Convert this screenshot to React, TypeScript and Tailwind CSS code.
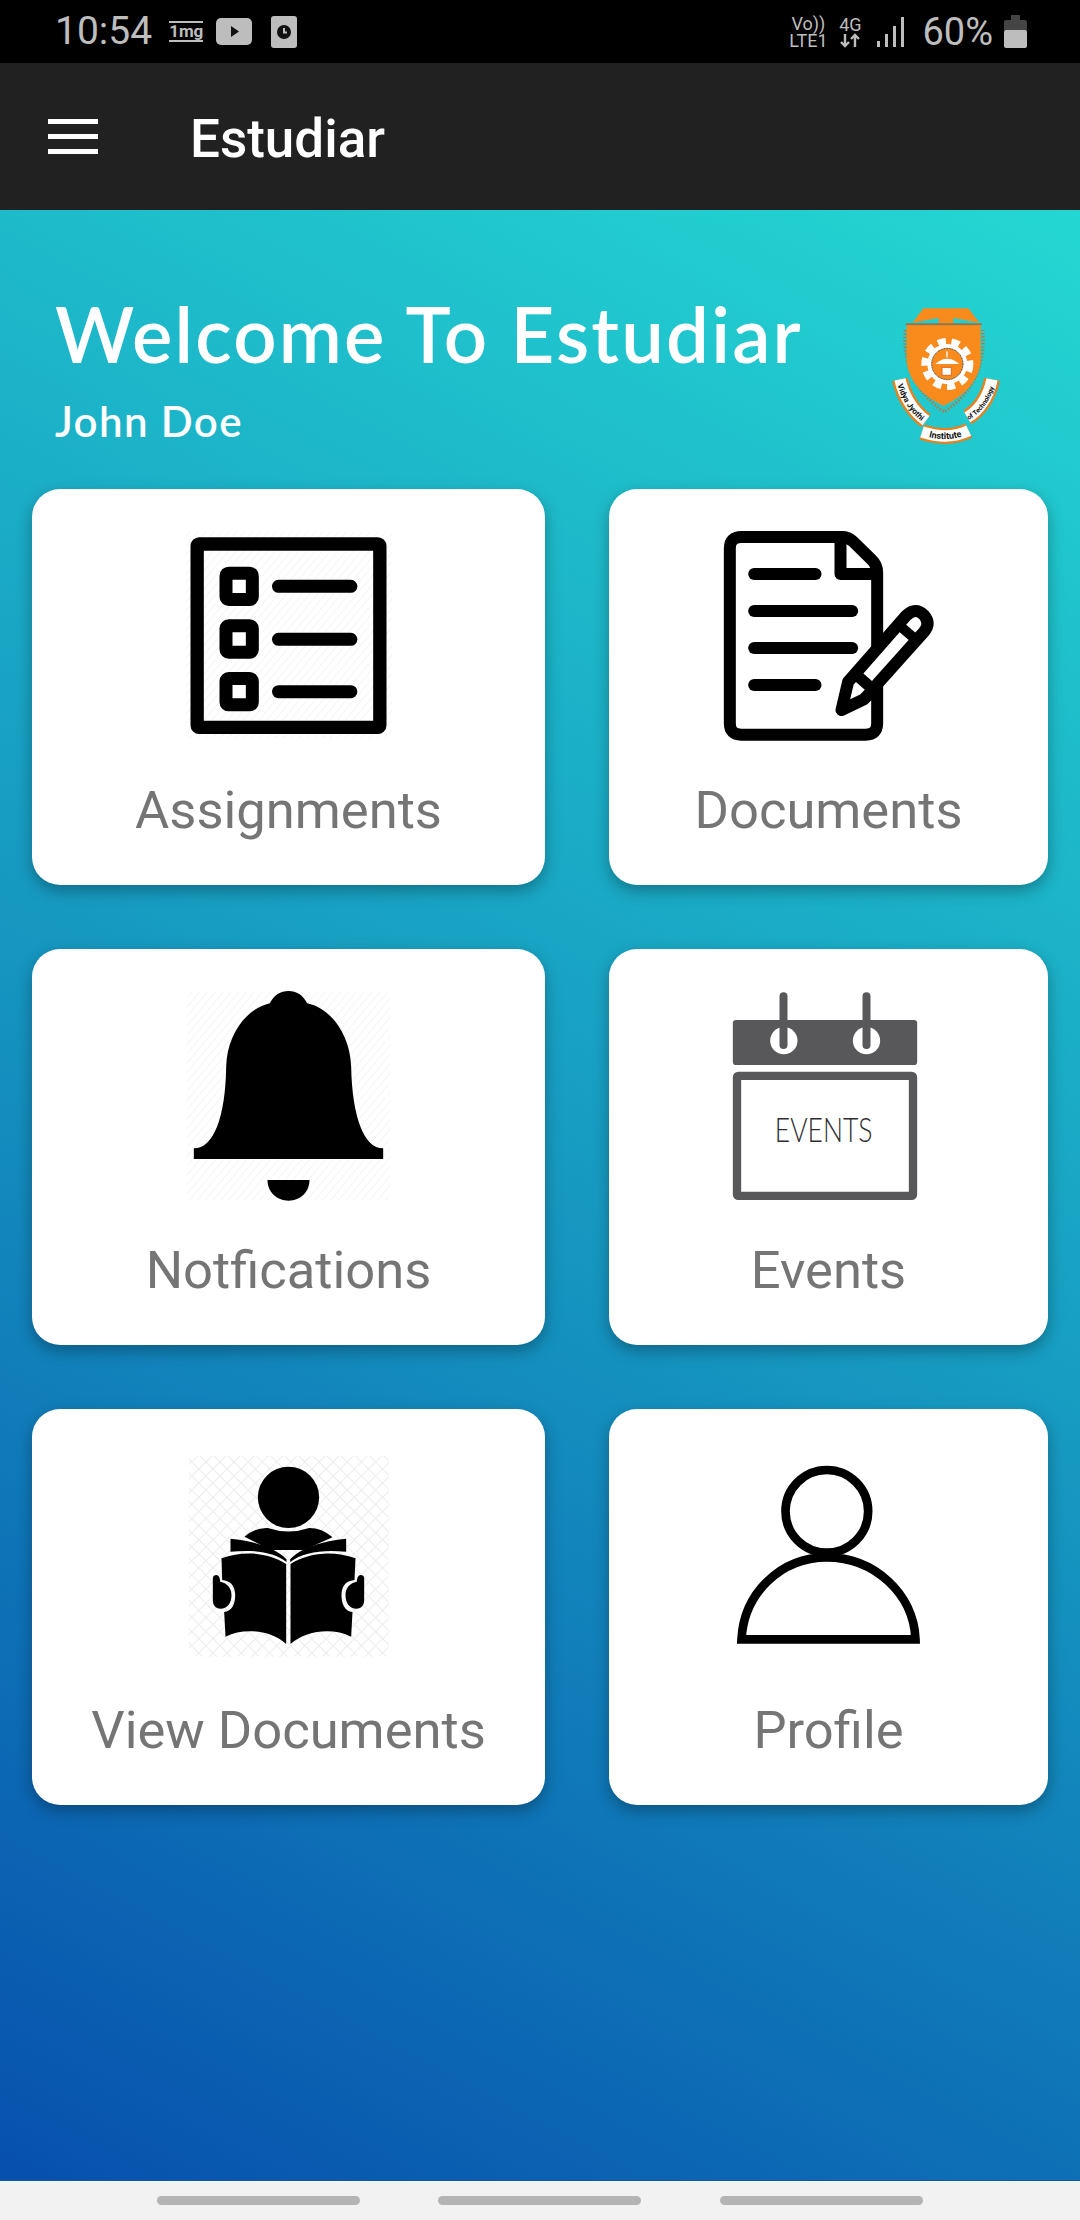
import React from "react";

const hatch = (id: string, rotate: number) => (
  <pattern id={id} width="18" height="18" patternUnits="userSpaceOnUse" patternTransform={`rotate(${rotate})`}>
    <line x1="0" y1="0" x2="0" y2="18" stroke="#f3f3f3" strokeWidth="5" />
  </pattern>
);

const AssignmentsIcon = () => (
  <svg width="240" height="240" viewBox="25.5 0 720 720">
    <defs>{hatch("hatchA", 40)}</defs>
    <rect x="75" y="65" width="620" height="620" fill="url(#hatchA)" />
    <rect x="110" y="102" width="548" height="550" rx="6" fill="none" stroke="#000" strokeWidth="40" />
    {[170, 328, 486].map((y) => (
      <rect key={y} x="196.5" y={y + 19.5} width="79" height="79" rx="8" fill="#fff" stroke="#000" strokeWidth="39" />
    ))}
    {[229, 388, 545].map((y) => (
      <line key={y} x1="354" y1={y} x2="571" y2={y} stroke="#000" strokeWidth="39" strokeLinecap="round" />
    ))}
  </svg>
);

const DocumentsIcon = () => (
  <svg width="240" height="240" viewBox="25.5 0 720 720">
    <path
      d="M123 81H425Q443 81 457 94L512 148Q530 165 530 188V640Q530 674 496 674H122Q88 674 88 640V115Q88 81 123 81Z"
      fill="#fff"
      stroke="#000"
      strokeWidth="36"
    />
    <path d="M420 81V192H530" fill="none" stroke="#000" strokeWidth="36" strokeLinejoin="round" />
    <line x1="161" y1="192" x2="345" y2="192" stroke="#000" strokeWidth="36" strokeLinecap="round" />
    <line x1="161" y1="303" x2="455" y2="303" stroke="#000" strokeWidth="36" strokeLinecap="round" />
    <line x1="161" y1="414" x2="455" y2="414" stroke="#000" strokeWidth="36" strokeLinecap="round" />
    <line x1="161" y1="525" x2="345" y2="525" stroke="#000" strokeWidth="36" strokeLinecap="round" />
    <path
      d="M423 600L443 515L618 316Q645 290 670 315Q692 340 670 366L533 519Q515 545 490 568Z"
      fill="#fff"
      stroke="#000"
      strokeWidth="36"
      strokeLinejoin="round"
    />
    <line x1="595" y1="345" x2="645" y2="388" stroke="#000" strokeWidth="30" />
    <line x1="462" y1="490" x2="517" y2="538" stroke="#000" strokeWidth="34" />
  </svg>
);

const BellIcon = () => (
  <svg width="240" height="240" viewBox="-4.5 0 720 720">
    <defs>{hatch("hatchB", 40)}</defs>
    <rect x="50" y="65" width="610" height="625" fill="url(#hatchB)" />
    <path
      d="M70 567V535C130 535 165 440 167 290C170 190 230 115 298 100C310 75 330 63 354 63C378 63 398 75 410 100C480 115 538 190 542 290C545 440 580 535 638 535V567Z"
      fill="#000"
    />
    <path d="M291 630H417C417 665 390 692 354 692C318 692 291 665 291 630Z" fill="#000" />
  </svg>
);

const EventsIcon = () => (
  <svg width="240" height="240" viewBox="-4.5 0 720 720">
    <rect x="67" y="150" width="553" height="135" rx="10" fill="#58585a" />
    <circle cx="220" cy="212" r="41" fill="#fff" />
    <circle cx="468" cy="212" r="41" fill="#fff" />
    <line x1="219" y1="79" x2="219" y2="225" stroke="#58585a" strokeWidth="24" strokeLinecap="round" />
    <line x1="468" y1="79" x2="468" y2="225" stroke="#58585a" strokeWidth="24" strokeLinecap="round" />
    <rect x="79.5" y="317.5" width="528" height="360" rx="4" fill="none" stroke="#58585a" strokeWidth="25" />
    <text
      x="193"
      y="516"
      fontSize="98"
      fontFamily="Lato, sans-serif"
      fontWeight="300"
      fill="#2f2f31"
      textLength="293"
      lengthAdjust="spacingAndGlyphs"
    >
      EVENTS
    </text>
  </svg>
);

const ViewDocumentsIcon = () => (
  <svg width="240" height="240" viewBox="-4.5 -30 720 720">
    <defs>
      <pattern id="cross" width="30" height="30" patternUnits="userSpaceOnUse" patternTransform="rotate(45)">
        <path d="M0 0H30M0 0V30" stroke="#ececec" strokeWidth="6" fill="none" />
      </pattern>
    </defs>
    <rect x="55" y="48" width="600" height="602" fill="url(#cross)" />
    <circle cx="354" cy="172" r="92" fill="#000" />
    <path d="M222 290Q255 262 292 264Q354 285 416 264Q455 264 486 292L400 330H300Z" fill="#000" />
    <path d="M180 296C250 303 315 322 348 358V366C310 336 250 328 180 335Z" fill="#000" />
    <path d="M527 296C457 303 392 322 359 358V366C397 336 457 328 527 335Z" fill="#000" />
    <path
      d="M153 355C220 330 295 338 347 372V612C300 570 220 562 165 590L161 516C185 514 195 490 194 462C192 434 178 422 155 420Z"
      fill="#000"
    />
    <path
      d="M555 355C488 330 413 338 360 372V612C407 570 487 562 542 590L546 516C522 514 512 490 513 462C515 434 529 422 552 420Z"
      fill="#000"
    />
    <path d="M127 415Q128 405 138 405Q148 406 149 425C172 430 183 445 183 465C183 490 170 506 150 506C135 506 127 495 127 480Z" fill="#000" />
    <path d="M581 415Q580 405 570 405Q560 406 559 425C536 430 525 445 525 465C525 490 538 506 558 506C573 506 581 495 581 480Z" fill="#000" />
  </svg>
);

const ProfileIcon = () => (
  <svg width="240" height="240" viewBox="-4.5 -30 720 720">
    <circle cx="349" cy="214" r="124" fill="none" stroke="#000" strokeWidth="26" />
    <path d="M93 598C100 460 210 352 349 352C490 352 610 460 615 598Z" fill="#fff" stroke="#000" strokeWidth="26" />
  </svg>
);

const Logo = () => (
  <svg width="160" height="170" viewBox="0 0 480 510">
    <defs>
      <path id="ribbonLeft" d="M112 284C127 336 158 376 194 400" />
      <path id="ribbonRight" d="M326 390C358 372 392 336 404 282" />
      <path id="ribbonMid" d="M206 441C245 451 285 449 322 433" />
    </defs>
    <path d="M158 98L190 55H325L358 98L280 84V100H236V84Z" fill="#f98a1c" />
    <path d="M136 120C128 220 165 305 252 366C345 305 376 220 368 120" fill="none" stroke="#b9753a" strokeWidth="10" strokeDasharray="4 6" />
    <rect x="137" y="100" width="228" height="6" fill="#a96a35" />
    <path d="M140 106H362V205C362 270 310 320 251 348C190 320 140 270 140 205Z" fill="#f98a1c" />
    <circle cx="262" cy="222" r="60" fill="#fff" />
    <circle cx="262" cy="222" r="68" fill="none" stroke="#fff" strokeWidth="20" strokeDasharray="24 17.4" />
    <circle cx="262" cy="222" r="47" fill="#f98a1c" stroke="#333" strokeWidth="3" strokeDasharray="3 2" />
    <path d="M226 222Q262 190 298 222Z" fill="#fff" />
    <rect x="246" y="232" width="28" height="24" fill="#fff" stroke="#e0671a" strokeWidth="3" />
    <rect x="259" y="184" width="4" height="18" fill="#fff" />
    <path d="M120 268C132 325 165 368 198 392" fill="none" stroke="#e8801c" strokeWidth="48" />
    <path d="M120 268C132 325 165 368 198 392" fill="none" stroke="#fff" strokeWidth="34" />
    <path d="M396 268C385 326 352 365 322 382" fill="none" stroke="#e8801c" strokeWidth="48" />
    <path d="M396 268C385 326 352 365 322 382" fill="none" stroke="#fff" strokeWidth="34" />
    <path d="M186 426C235 442 285 442 326 422" fill="none" stroke="#e8801c" strokeWidth="48" />
    <path d="M186 426C235 442 285 442 326 422" fill="none" stroke="#fff" strokeWidth="34" />
    <text fontSize="24" fontFamily="Roboto, sans-serif" fontWeight="700" fill="#111">
      <textPath href="#ribbonLeft">Vidya Jyothi</textPath>
    </text>
    <text fontSize="20" fontFamily="Roboto, sans-serif" fontWeight="700" fill="#111">
      <textPath href="#ribbonRight">of Technology</textPath>
    </text>
    <text fontSize="27" fontFamily="Roboto, sans-serif" fontWeight="700" fill="#111">
      <textPath href="#ribbonMid">Institute</textPath>
    </text>
  </svg>
);

const StatusBar = () => (
  <div className="flex h-[63px] items-center justify-between bg-black pl-[55px] pr-[53px] font-['Roboto',sans-serif] text-[#bdbdbd]">
    <div className="flex items-center">
      <span className="text-[39px] leading-none">10:54</span>
      <span className="ml-[17px] border-b-2 border-t-2 border-[#bdbdbd] text-[17px] font-bold leading-[17px]">1mg</span>
      <svg className="ml-[13px]" width="36" height="27" viewBox="0 0 36 27">
        <rect width="36" height="27" rx="5" fill="#bdbdbd" />
        <path d="M15 8L23 13.5L15 19Z" fill="#111" />
      </svg>
      <svg className="ml-[19px]" width="26" height="32" viewBox="0 0 26 32">
        <rect width="26" height="32" rx="3" fill="#bdbdbd" />
        <circle cx="13" cy="16" r="7" fill="#111" />
        <path d="M13 12V16.5H16" fill="none" stroke="#bdbdbd" strokeWidth="2" />
      </svg>
    </div>
    <div className="flex items-center">
      <div className="flex w-[40px] flex-col items-center text-[18px] leading-[17px]">
        <span>Vo))</span>
        <span>LTE1</span>
      </div>
      <div className="ml-[10px] flex w-[24px] flex-col items-center text-[18px] leading-[17px]">
        <span>4G</span>
        <svg width="22" height="15" viewBox="0 0 22 15">
          <path d="M6 1V13M2 9L6 13L10 9M16 14V2M12 6L16 2L20 6" fill="none" stroke="#bdbdbd" strokeWidth="2.4" />
        </svg>
      </div>
      <svg className="ml-[15px]" width="27" height="30" viewBox="0 0 27 30">
        <rect x="0" y="24" width="3" height="6" fill="#bdbdbd" />
        <rect x="8" y="17" width="3" height="13" fill="#bdbdbd" />
        <rect x="16" y="9" width="3" height="21" fill="#bdbdbd" />
        <rect x="24" y="0" width="3" height="30" fill="#bdbdbd" />
      </svg>
      <span className="ml-[18px] text-[38px] leading-none">60%</span>
      <svg className="ml-[11px]" width="23" height="33" viewBox="0 0 23 33">
        <rect x="7" y="0" width="9" height="6" fill="#444" />
        <rect x="0" y="5" width="23" height="11" rx="2" fill="#444" />
        <rect x="0" y="15" width="23" height="18" rx="2" fill="#bdbdbd" />
      </svg>
    </div>
  </div>
);

const tiles = [
  { label: "Assignments", icon: <AssignmentsIcon /> },
  { label: "Documents", icon: <DocumentsIcon /> },
  { label: "Notfications", icon: <BellIcon /> },
  { label: "Events", icon: <EventsIcon /> },
  { label: "View Documents", icon: <ViewDocumentsIcon /> },
  { label: "Profile", icon: <ProfileIcon /> },
];

const App: React.FC = () => {
  return (
    <div className="flex h-[2220px] w-[1080px] flex-col overflow-hidden bg-[#f2f2f2]">
      <StatusBar />

      <header className="flex h-[147px] items-center bg-[#212121] pl-[48px] font-['Roboto',sans-serif]">
        <div className="flex w-[50px] flex-col gap-[10px]">
          <div className="h-[5px] bg-white" />
          <div className="h-[5px] bg-white" />
          <div className="h-[5px] bg-white" />
        </div>
        <h1 className="ml-[92px] mt-[6px] text-[53px] font-medium leading-none text-white">Estudiar</h1>
      </header>

      <main className="flex h-[1971px] flex-col border-b border-[#0b5f95] bg-[linear-gradient(208deg,#24d7d2_0%,#1698c1_50%,#0750ad_100%)]">
        <section className="flex h-[279px] items-start justify-between pr-[60px]">
          <div className="pl-[55px] pt-[88px] font-['Lato',sans-serif] font-semibold text-white">
            <h2 className="text-[76px] leading-[72px] tracking-[2.2px]">Welcome To Estudiar</h2>
            <p className="mt-[29px] text-[42px] leading-[44px] tracking-[1.4px]">John Doe</p>
          </div>
          <div className="pt-[80px]">
            <Logo />
          </div>
        </section>

        <section className="grid grid-cols-[513px_439px] gap-x-16 gap-y-16 px-8">
          {tiles.map((tile) => (
            <div
              key={tile.label}
              className="flex h-[396px] flex-col items-center rounded-[28px] bg-white pt-[21px] shadow-[0_6px_16px_rgba(0,0,0,0.3)]"
            >
              {tile.icon}
              <span className="mt-[32px] font-['Roboto',sans-serif] text-[52.5px] leading-[56px] text-[#757575]">
                {tile.label}
              </span>
            </div>
          ))}
        </section>
      </main>

      <nav className="flex flex-1 items-center pl-[157px]">
        <div className="h-[9px] w-[203px] rounded-full bg-[#b4b4b4]" />
        <div className="ml-[78px] h-[9px] w-[203px] rounded-full bg-[#b4b4b4]" />
        <div className="ml-[79px] h-[9px] w-[203px] rounded-full bg-[#b4b4b4]" />
      </nav>
    </div>
  );
};

export default App;
